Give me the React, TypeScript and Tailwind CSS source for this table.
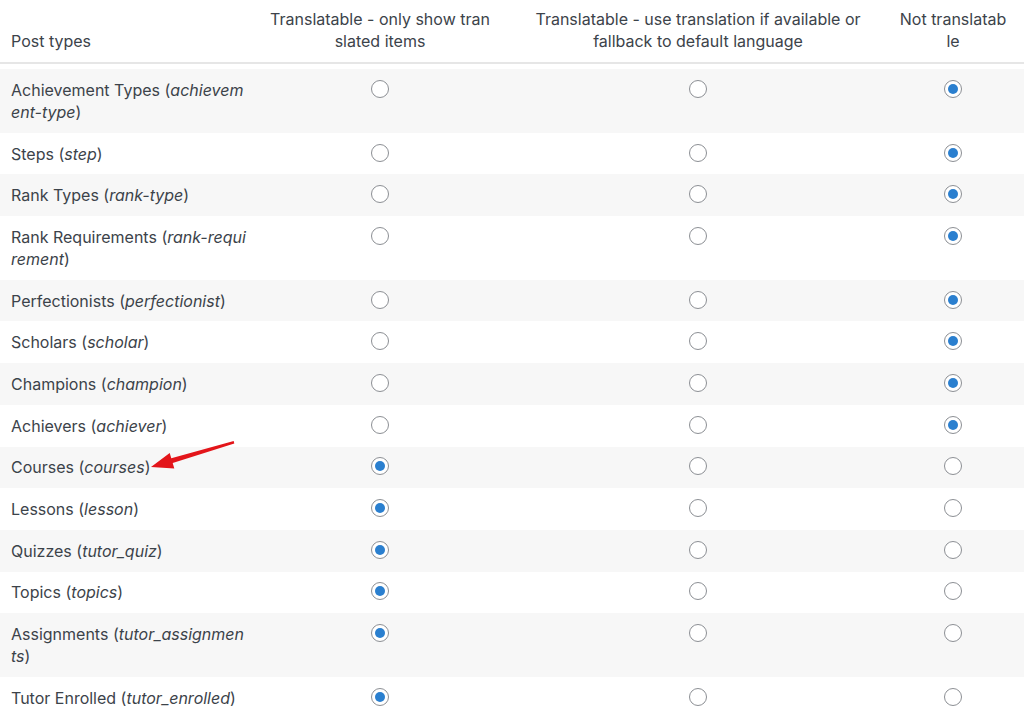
import { useState } from "react";

type Row = { label: string; slug: string; value: number };

const rows: Row[] = [
  { label: "Achievement Types", slug: "achievement-type", value: 2 },
  { label: "Steps", slug: "step", value: 2 },
  { label: "Rank Types", slug: "rank-type", value: 2 },
  { label: "Rank Requirements", slug: "rank-requirement", value: 2 },
  { label: "Perfectionists", slug: "perfectionist", value: 2 },
  { label: "Scholars", slug: "scholar", value: 2 },
  { label: "Champions", slug: "champion", value: 2 },
  { label: "Achievers", slug: "achiever", value: 2 },
  { label: "Courses", slug: "courses", value: 0 },
  { label: "Lessons", slug: "lesson", value: 0 },
  { label: "Quizzes", slug: "tutor_quiz", value: 0 },
  { label: "Topics", slug: "topics", value: 0 },
  { label: "Assignments", slug: "tutor_assignments", value: 0 },
  { label: "Tutor Enrolled", slug: "tutor_enrolled", value: 0 },
];

const Radio = ({ checked, onClick }: { checked: boolean; onClick: () => void }) => (
  <button
    onClick={onClick}
    className="mx-auto mt-[1px] flex h-[18px] w-[18px] items-center justify-center rounded-full border border-[#8c8f94] bg-white"
  >
    {checked && <span className="block h-[10px] w-[10px] rounded-full bg-[#2a7fcf]" />}
  </button>
);

export default function App() {
  const [values, setValues] = useState<number[]>(rows.map(r => r.value));

  const setValue = (idx: number, v: number) => {
    const next = [...values];
    next[idx] = v;
    setValues(next);
  };

  return (
    <div className="relative w-[1024px] h-[717px] overflow-hidden bg-white text-[16px] leading-[22px] text-[#3c434a] [font-family:Inter,'Liberation_Sans',sans-serif]">
      <table className="w-[1024px] table-fixed border-collapse">
        <colgroup>
          <col className="w-[248px]" />
          <col className="w-[264px]" />
          <col className="w-[372px]" />
          <col className="w-[138px]" />
          <col className="w-[2px]" />
        </colgroup>
        <thead>
          <tr className="h-[63px] border-b-2 border-[#e6e6e6]">
            <th className="pl-[11px] pr-0 pb-[10px] text-left align-bottom font-normal break-all">Post types</th>
            <th className="px-[21px] pb-[10px] text-center align-bottom font-normal break-all">
              Translatable - only show translated items
            </th>
            <th className="px-[21px] pb-[10px] text-center align-bottom font-normal break-all">
              Translatable - use translation if available or fallback to default language
            </th>
            <th className="px-[14px] pb-[10px] text-center align-bottom font-normal break-all">Not translatable</th>
            <th />
          </tr>
        </thead>
        <tbody>
          <tr className="h-[6px]">
            <td colSpan={5} />
          </tr>
          {rows.map((row, idx) => (
            <tr key={row.label} className={idx % 2 === 0 ? "bg-[#f7f7f7]" : "bg-white"}>
              <td className="pl-[11px] pr-0 py-[9.85px] align-top break-all">
                {row.label} (<i>{row.slug}</i>)
              </td>
              {[0, 1, 2].map(col => (
                <td key={col} className="px-[10px] py-[9.85px] align-top">
                  <Radio checked={values[idx] === col} onClick={() => setValue(idx, col)} />
                </td>
              ))}
              <td />
            </tr>
          ))}
        </tbody>
      </table>

      {/* annotation arrow */}
      <svg className="pointer-events-none absolute left-0 top-0" width="1024" height="717">
        <polygon
          points="151,467 169.7,453 171.3,458.3 233.7,441 234.3,443.4 172.7,463.1 174.3,468.4"
          fill="#e3151a"
        />
      </svg>
    </div>
  );
}
